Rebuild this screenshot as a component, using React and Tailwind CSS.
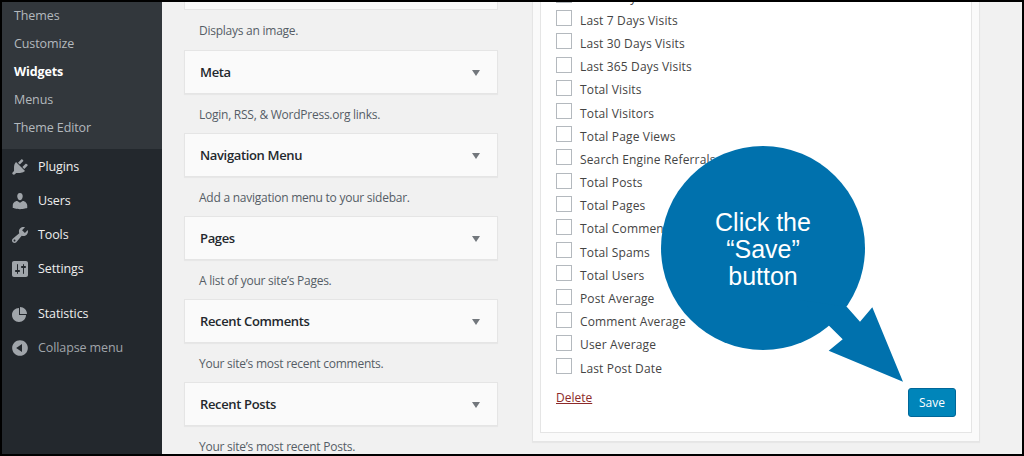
import React from 'react';

const subItems = ['Themes', 'Customize', 'Widgets', 'Menus', 'Theme Editor'];

const icons = {
  plugins: 'M13.11 4.36L9.87 7.6 8 5.73l3.24-3.24c.35-.34 1.05-.2 1.56.32.52.51.66 1.21.31 1.55zm-8 1.77l.91-1.12 9.01 9.01-1.19.84c-.71.71-2.63 1.16-3.82 1.16H6.14L4.9 17.26c-.59.59-1.54.59-2.12 0-.59-.58-.59-1.53 0-2.12l1.24-1.24v-3.88c0-1.13.4-3.19 1.09-3.89zm7.26 3.97l3.24-3.24c.34-.35 1.04-.21 1.55.31.52.51.66 1.21.31 1.55l-3.24 3.25z',
  users: 'M10 9.25c-2.27 0-2.73-3.44-2.73-3.44C7 4.02 7.82 2 9.97 2c2.16 0 2.98 2.02 2.71 3.81 0 0-.41 3.44-2.68 3.44zm0 2.57L12.72 10c2.39 0 4.52 2.33 4.52 4.53v2.49s-3.65 1.13-7.24 1.13c-3.65 0-7.24-1.13-7.24-1.13v-2.49c0-2.25 1.94-4.48 4.47-4.48z',
  tools: 'M16.68 9.77c-1.34 1.34-3.3 1.67-4.95.99l-5.41 6.52c-.99.99-2.59.99-3.58 0s-.99-2.59 0-3.57l6.52-5.42c-.68-1.65-.35-3.61.99-4.95 1.28-1.28 3.12-1.62 4.72-1.06l-2.89 2.89 2.82 2.82 2.86-2.87c.53 1.58.18 3.39-1.08 4.65zM3.81 16.21c.4.39 1.04.39 1.43 0 .4-.4.4-1.04 0-1.43-.39-.4-1.03-.4-1.43 0-.39.39-.39 1.03 0 1.43z',
  settings: 'M18 16V4c0-1.1-.9-2-2-2H4c-1.1 0-2 .9-2 2v12c0 1.1.9 2 2 2h12c1.1 0 2-.9 2-2zM8 11h1c.55 0 1 .45 1 1s-.45 1-1 1H8v1.5c0 .28-.22.5-.5.5s-.5-.22-.5-.5V13H6c-.55 0-1-.45-1-1s.45-1 1-1h1V5.5c0-.28.22-.5.5-.5s.5.22.5.5V11zm5-2h-1c-.55 0-1-.45-1-1s.45-1 1-1h1V5.5c0-.28.22-.5.5-.5s.5.22.5.5V7h1c.55 0 1 .45 1 1s-.45 1-1 1h-1v5.5c0 .28-.22.5-.5.5s-.5-.22-.5-.5V9z',
  pie: 'M10 10V3c3.87 0 7 3.13 7 7h-7zM9 4v7h7c0 3.87-3.13 7-7 7s-7-3.13-7-7 3.13-7 7-7z',
  collapse: 'M10 2.16c4.33 0 7.84 3.51 7.84 7.84s-3.51 7.84-7.84 7.84S2.16 14.33 2.16 10 5.71 2.16 10 2.16zm2 11.72V6.12L6.18 9.97z',
};

const widgets = [
  { title: 'Meta', desc: 'Login, RSS, & WordPress.org links.' },
  { title: 'Navigation Menu', desc: 'Add a navigation menu to your sidebar.' },
  { title: 'Pages', desc: "A list of your site\u2019s Pages." },
  { title: 'Recent Comments', desc: 'Your site\u2019s most recent comments.' },
  { title: 'Recent Posts', desc: 'Your site\u2019s most recent Posts.' },
];

const stats = [
  'Yesterday Visitors', 'Last 7 Days Visits', 'Last 30 Days Visits', 'Last 365 Days Visits', 'Total Visits',
  'Total Visitors', 'Total Page Views', 'Search Engine Referrals', 'Total Posts', 'Total Pages',
  'Total Comments', 'Total Spams', 'Total Users', 'Post Average', 'Comment Average', 'User Average', 'Last Post Date',
];

const MenuIcon = ({ d }) => (
  <svg viewBox="0 0 20 20" className="w-5 h-5 shrink-0 fill-[#a0a5aa]">
    <path d={d} />
  </svg>
);

const MenuItem = ({ icon, label, muted }) => (
  <div className={`h-[34px] pl-2 flex items-center gap-2 ${muted ? 'text-[#a0a5aa]' : 'text-[#eeeeee]'}`}>
    <MenuIcon d={icon} />
    <span>{label}</span>
  </div>
);

const Sidebar = () => (
  <div className="w-[160px] shrink-0 bg-[#23282d] text-[12.5px] tracking-[-0.1px]">
    <div className="bg-[#32373c] pb-[7px] pl-3">
      {subItems.map((item) => (
        <div key={item} className={`h-[28px] flex items-center ${item === 'Widgets' ? 'text-white font-bold' : 'text-[#b4b9be]'}`}>
          {item}
        </div>
      ))}
    </div>
    <div className="pt-[1px]">
      <MenuItem icon={icons.plugins} label="Plugins" />
      <MenuItem icon={icons.users} label="Users" />
      <MenuItem icon={icons.tools} label="Tools" />
      <MenuItem icon={icons.settings} label="Settings" />
      <div className="h-[11px]" />
      <MenuItem icon={icons.pie} label="Statistics" />
      <MenuItem icon={icons.collapse} label="Collapse menu" muted />
    </div>
  </div>
);

const WidgetCard = ({ title }) => (
  <div className="h-[44px] pt-[2px] bg-[#fafafa] border border-[#e5e5e5] shadow-[0_1px_1px_rgba(0,0,0,0.04)] pl-[15px] pr-[17px] flex items-center justify-between">
    <span className="text-[13px] tracking-[-0.35px] font-semibold text-[#23282d]">{title}</span>
    <div className="w-0 h-0 border-x-[4px] border-x-transparent border-t-[6px] border-t-[#72777c]" />
  </div>
);

const WidgetList = () => (
  <div className="w-[314px] shrink-0 ml-[22px] text-[12px] tracking-[-0.25px] text-[#555d66]">
    <div className="h-[8px] bg-[#fafafa] border-x border-b border-[#e5e5e5]" />
    <p className="h-[40px] pt-[2px] pl-[15px] flex items-center">Displays an image.</p>
    {widgets.map((w) => (
      <div key={w.title}>
        <WidgetCard title={w.title} />
        <p className="h-[39px] pt-[2px] pl-[15px] flex items-center">{w.desc}</p>
      </div>
    ))}
  </div>
);

const StatsPanel = () => (
  <div className="w-[448px] h-[440px] shrink-0 ml-[34px] bg-[#fafafa] border-x border-b border-[#e5e5e5] px-[7px] pb-[8px] shadow-[0_1px_1px_rgba(0,0,0,0.04)]">
    <div className="h-full bg-white border-x border-b border-[#e5e5e5] px-[15px] overflow-hidden">
      <div className="-mt-[16px]">
        {stats.map((s) => (
          <label key={s} className="h-[23.2px] flex items-center gap-2 text-[12px] tracking-[0.15px] text-[#444444]">
            <span className="w-4 h-4 mb-[5px] shrink-0 bg-white border border-[#b4b9be]" />
            {s}
          </label>
        ))}
      </div>
      <div className="mt-[8px] flex items-start justify-between">
        <a className="mt-[1px] text-[12px] text-[#8c2a2a] underline">Delete</a>
        <button className="w-[48px] h-[29px] rounded-[3px] bg-[#0085ba] border border-[#006799] text-white text-[12px]">Save</button>
      </div>
    </div>
  </div>
);

const Callout = () => (
  <>
    <svg viewBox="0 0 1024 456" className="absolute -left-[2px] -top-[2px] w-[1024px] h-[456px] fill-[#0071ad]">
      <circle cx="763" cy="248" r="102" />
      <polygon points="846.7,306.7 860,321.7 872.3,307.3 903,381.7 828.7,350.7 842.7,339.3 829.3,326 800,300" />
    </svg>
    <div className="absolute left-[678px] top-[207px] w-[166px] text-center text-white text-[25px] leading-[27px] font-['Liberation_Sans',sans-serif]">
      Click the<br />“Save”<br />button
    </div>
  </>
);

export default function App() {
  return (
    <div className="relative w-[1024px] h-[456px] box-border border-2 border-black bg-[#f1f1f1] overflow-hidden flex font-['Open_Sans',sans-serif]">
      <Sidebar />
      <WidgetList />
      <StatsPanel />
      <Callout />
    </div>
  );
}
